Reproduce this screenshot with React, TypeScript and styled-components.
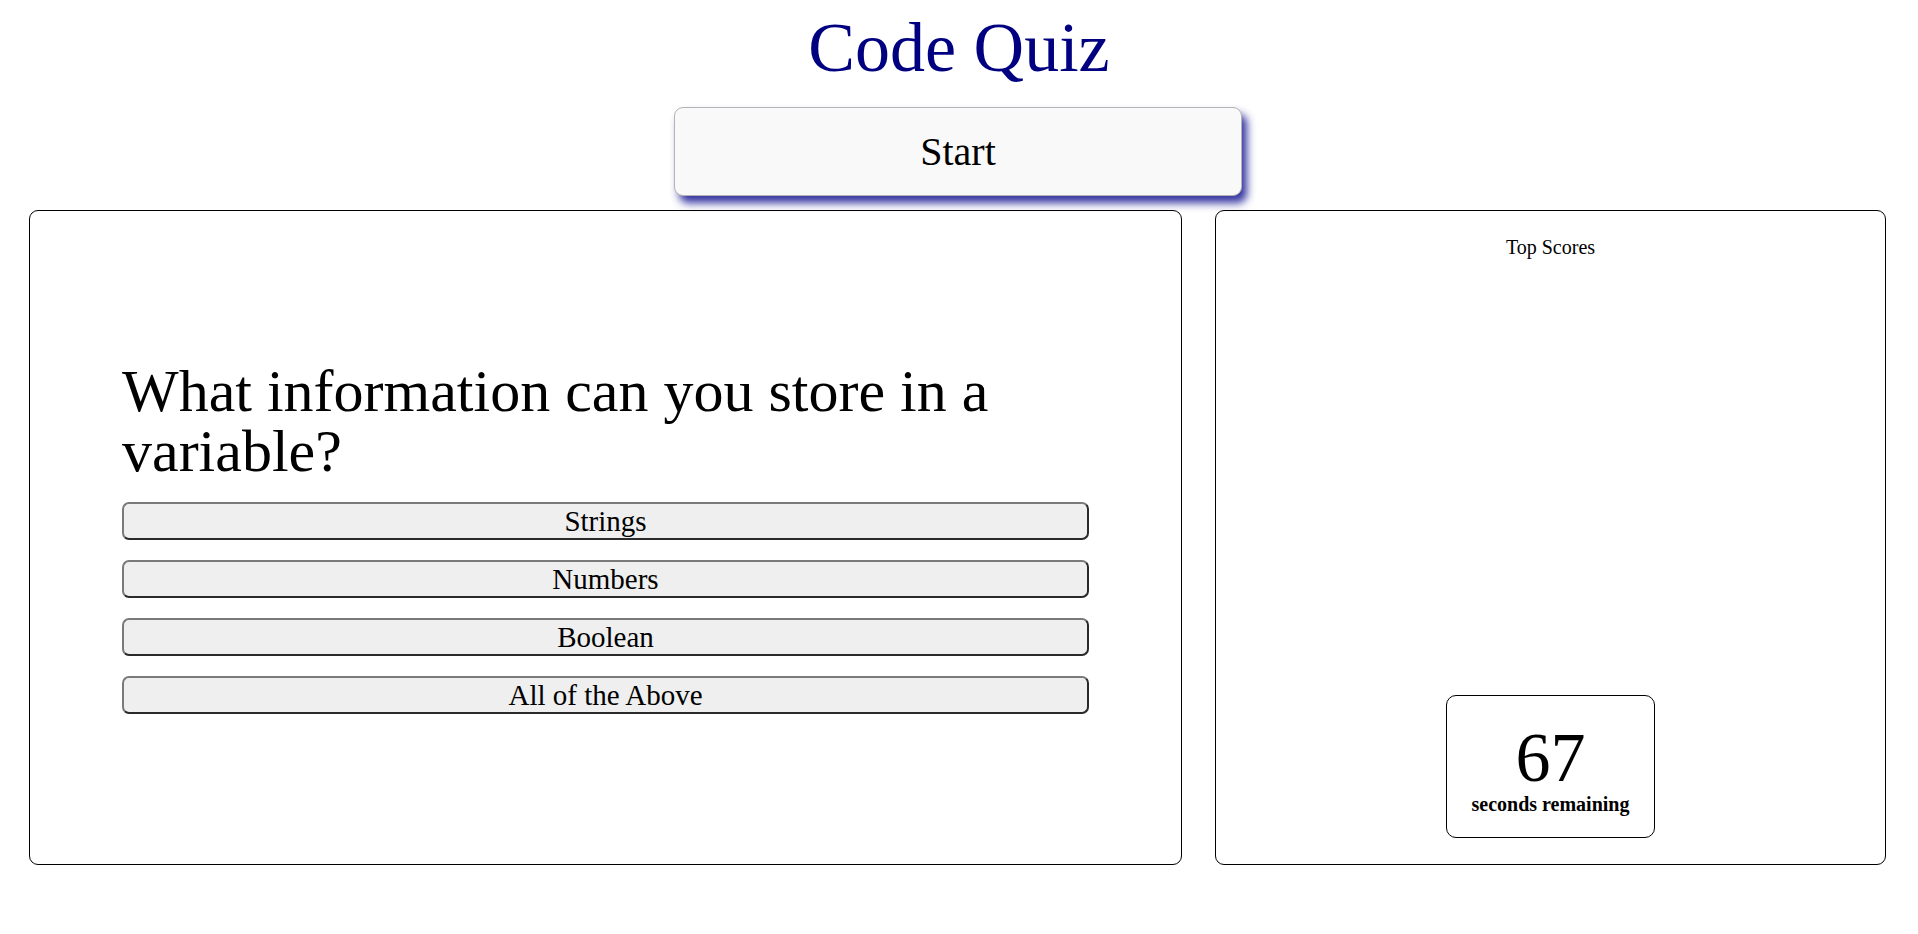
import React from "react";
import styled, { createGlobalStyle } from "styled-components";

const GlobalStyle = createGlobalStyle`
  html, body {
    margin: 0;
    padding: 0;
    background: #ffffff;
  }
  body {
    font-family: "Liberation Serif", "Times New Roman", serif;
    color: #000;
  }
`;

const Page = styled.div`
  display: flex;
  flex-direction: column;
  align-items: center;
  padding-top: 8px;
`;

const Title = styled.h1`
  margin: 0;
  font-size: 70px;
  line-height: 80px;
  font-weight: normal;
  color: #000080;
  text-align: center;
`;

const StartButton = styled.button`
  margin-top: 19px;
  margin-left: -2px;
  width: 568px;
  height: 89px;
  font-family: "Liberation Serif", "Times New Roman", serif;
  font-size: 40px;
  color: #000;
  background: #f9f9f9;
  border: 1.5px solid #b4b4b4;
  border-radius: 9px;
  box-shadow: 5px 7px 8px rgba(30, 30, 150, 0.9);
  cursor: pointer;
`;

const Main = styled.div`
  align-self: stretch;
  display: flex;
  gap: 33px;
  margin: 14px 32px 0 29px;
  height: 655px;
`;

const Panel = styled.section<{ $width: number }>`
  box-sizing: border-box;
  width: ${(p) => p.$width}px;
  flex: none;
  border: 1px solid #000;
  border-radius: 9px;
  display: flex;
  flex-direction: column;
`;

const QuizPanel = styled(Panel)`
  justify-content: center;
  padding: 0 92px;
`;

const Question = styled.h2`
  margin: 0 0 21px;
  font-size: 60px;
  line-height: 60px;
  font-weight: normal;
`;

const Answers = styled.div`
  display: flex;
  flex-direction: column;
  gap: 20px;
`;

const Answer = styled.button`
  box-sizing: border-box;
  width: 100%;
  height: 38px;
  padding: 0 6px;
  font-family: "Liberation Serif", "Times New Roman", serif;
  font-size: 29px;
  line-height: 32px;
  color: #000;
  background: #efefef;
  border: 2px solid;
  border-color: #7a7a7a #2a2a2a #2a2a2a #7a7a7a;
  border-radius: 7px;
  cursor: pointer;
`;

const ScorePanel = styled(Panel)`
  align-items: center;
  padding: 25px 0 26px;
`;

const ScoresTitle = styled.div`
  font-size: 20px;
  line-height: 23px;
`;

const ScoreList = styled.ol`
  flex: 1;
  margin: 0;
  padding: 0;
  list-style: none;
`;

const Timer = styled.div`
  box-sizing: border-box;
  width: 209px;
  height: 143px;
  border: 1px solid #000;
  border-radius: 10px;
  padding-top: 27px;
  display: flex;
  flex-direction: column;
  align-items: center;
`;

const Seconds = styled.div`
  font-size: 70px;
  line-height: 70px;
`;

const Caption = styled.div`
  font-size: 20px;
  line-height: 23px;
  font-weight: bold;
`;

const answers = ["Strings", "Numbers", "Boolean", "All of the Above"];

export default function App() {
  return (
    <>
      <GlobalStyle />
      <Page>
        <Title>Code Quiz</Title>
        <StartButton>Start</StartButton>
        <Main>
          <QuizPanel $width={1153}>
            <Question>What information can you store in a variable?</Question>
            <Answers>
              {answers.map((a) => (
                <Answer key={a}>{a}</Answer>
              ))}
            </Answers>
          </QuizPanel>
          <ScorePanel $width={671}>
            <ScoresTitle>Top Scores</ScoresTitle>
            <ScoreList />
            <Timer>
              <Seconds>67</Seconds>
              <Caption>seconds remaining</Caption>
            </Timer>
          </ScorePanel>
        </Main>
      </Page>
    </>
  );
}
